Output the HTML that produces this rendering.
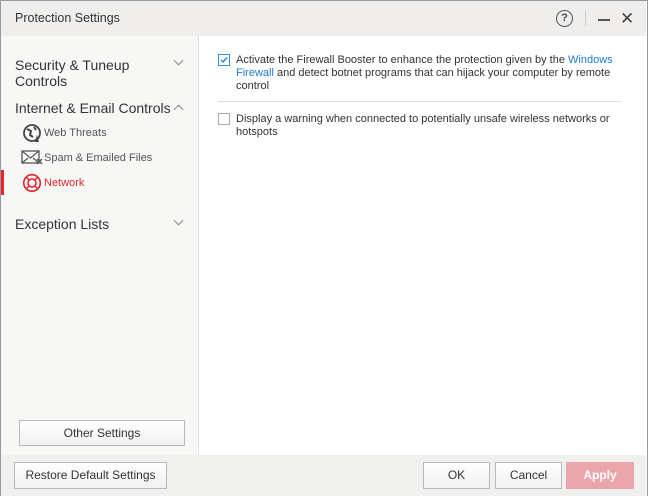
<!DOCTYPE html>
<html><head><style>
*{box-sizing:border-box;margin:0;padding:0}
body{width:648px;height:496px;position:relative;overflow:hidden;background:#fff;font-family:"Liberation Sans",sans-serif;color:#333;font-size:13px}
.win{position:absolute;left:0;top:0;width:648px;height:496px;border:1px solid #999;border-bottom:none}
.title{position:absolute;left:1px;top:1px;width:645px;height:35px;background:#efeeec;}
.title span{position:absolute;left:14px;top:10px;font-size:12.5px;color:#333}
.side{position:absolute;left:1px;top:36px;width:198px;height:419px;background:#f7f7f6;border-right:1px solid #e2e2e2}
.foot{position:absolute;left:1px;top:455px;width:645px;height:41px;background:#f0f0ef}
.btn{position:absolute;height:27px;border:1px solid #b9b9b9;background:linear-gradient(#fff,#f1f1f1);font-size:12px;text-align:center;line-height:25px;color:#333}
.h{position:absolute;left:14px;font-size:14px;color:#333;line-height:16px}
.chev{position:absolute;left:174px;width:7px;height:7px;border-right:1.3px solid #888;border-bottom:1.3px solid #888}
.sub{position:absolute;left:43px;font-size:11px;color:#555}
.t{position:absolute;left:236px;font-size:11px;line-height:13px;color:#333;width:380px}
.cb{position:absolute;left:218px;width:12px;height:12px;border:1px solid #aaa;background:#fff}
</style></head><body>
<div class="win"></div>
<div class="title"><span>Protection Settings</span>
<div style="position:absolute;left:555px;top:9px;width:17px;height:17px;border:1.5px solid #555;border-radius:50%;font-size:11px;font-weight:bold;text-align:center;line-height:14px;color:#444">?</div>
<div style="position:absolute;left:584px;top:10px;width:1px;height:15px;background:#ccc"></div>
<div style="position:absolute;left:597px;top:18px;width:12px;height:1.5px;background:#555"></div>
<div style="position:absolute;left:619px;top:8px;font-size:17px;color:#444">✕</div>
</div>
<div class="side">
<div class="h" style="top:21px">Security &amp; Tuneup<br>Controls</div>
<div class="chev" style="top:21px;transform:rotate(45deg)"></div>
<div class="h" style="top:64px">Internet &amp; Email Controls</div>
<div class="chev" style="top:70px;transform:rotate(-135deg)"></div>
<svg style="position:absolute;left:21px;top:87px" width="20" height="20" viewBox="0 0 20 20"><circle cx="10" cy="10" r="8" fill="none" stroke="#444" stroke-width="1.8"/><path d="M5 6 l4 2 -1 4 3 2 M12 4 l2 3" stroke="#444" stroke-width="2" fill="none"/><path d="M13 19 l2-7 2 7z" fill="#444"/></svg>
<div class="sub" style="top:91px">Web Threats</div>
<svg style="position:absolute;left:20px;top:113px" width="22" height="16" viewBox="0 0 22 16"><rect x="1" y="2" width="17" height="12" fill="none" stroke="#555" stroke-width="1.3"/><path d="M1 2 l8.5 7 8.5-7 M1 14 l6-5 M18 14 l-6-5" stroke="#555" stroke-width="1.2" fill="none"/><path d="M16 10 l5 5 M21 10 l-5 5" stroke="#555" stroke-width="1.4"/></svg>
<div class="sub" style="top:116px">Spam &amp; Emailed Files</div>
<div style="position:absolute;left:0;top:134px;width:3px;height:25px;background:#e1262d"></div>
<svg style="position:absolute;left:21px;top:137px" width="20" height="20" viewBox="0 0 20 20"><circle cx="10" cy="10" r="8.3" fill="none" stroke="#e1262d" stroke-width="1.6"/><circle cx="10" cy="10" r="4" fill="none" stroke="#e1262d" stroke-width="1.5"/><path d="M4 4 l3 3 M16 4 l-3 3 M4 16 l3-3 M16 16 l-3-3" stroke="#e1262d" stroke-width="1.5"/></svg>
<div class="sub" style="top:141px;color:#e1262d">Network</div>
<div class="h" style="top:180px">Exception Lists</div>
<div class="chev" style="top:181px;transform:rotate(45deg)"></div>
<div class="btn" style="left:18px;top:384px;width:166px;height:26px">Other Settings</div>
</div>
<div class="cb" style="top:54px;border-color:#3a8fd8"><svg width="10" height="10" viewBox="0 0 10 10" style="position:absolute;left:0;top:0"><path d="M2 5 l2 2 4-4.5" stroke="#2a7fcc" stroke-width="1.4" fill="none"/></svg></div>
<div class="t" style="top:54px">Activate the Firewall Booster to enhance the protection given by the <span style="color:#1a7ad0">Windows Firewall</span> and detect botnet programs that can hijack your computer by remote control</div>
<div style="position:absolute;left:218px;top:101px;width:403px;height:1px;background:#ddd"></div>
<div class="cb" style="top:113px"></div>
<div class="t" style="top:113px">Display a warning when connected to potentially unsafe wireless networks or hotspots</div>
<div class="foot"></div>
<div class="btn" style="left:14px;top:462px;width:153px">Restore Default Settings</div>
<div class="btn" style="left:423px;top:462px;width:67px">OK</div>
<div class="btn" style="left:495px;top:462px;width:67px">Cancel</div>
<div class="btn" style="left:566px;top:462px;width:68px;background:#eba6ab;border-color:#eba6ab;color:#fff;font-weight:bold">Apply</div>
</body></html>
